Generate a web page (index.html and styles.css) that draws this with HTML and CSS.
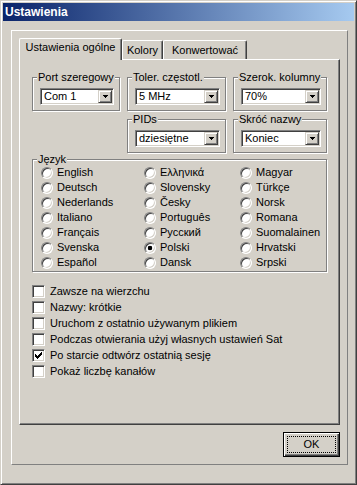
FILE: index.html
```html
<!DOCTYPE html>
<html lang="pl">
<head>
<meta charset="utf-8">
<title>Ustawienia</title>
<link rel="stylesheet" href="styles.css">
</head>
<body>
<div class="window">
  <div class="titlebar">Ustawienia</div>
  <div class="frame">
    <div class="tabs">
      <div class="tab active">Ustawienia ogólne</div>
      <div class="tab t-kolory">Kolory</div>
      <div class="tab t-konw">Konwertować</div>
    </div>
    <div class="panel">
      <div class="groups">
        <div class="group">
          <span class="legend">Port szeregowy</span>
          <div class="combo"><span class="val">Com 1</span><span class="drop"><svg width="5" height="3" viewBox="0 0 5 3" shape-rendering="crispEdges"><path d="M0 0h5v1H0zM1 1h3v1H1zM2 2h1v1H2z" fill="#000"/></svg></span></div>
        </div>
        <div class="group">
          <span class="legend">Toler. częstotl.</span>
          <div class="combo"><span class="val">5 MHz</span><span class="drop"><svg width="5" height="3" viewBox="0 0 5 3" shape-rendering="crispEdges"><path d="M0 0h5v1H0zM1 1h3v1H1zM2 2h1v1H2z" fill="#000"/></svg></span></div>
        </div>
        <div class="group">
          <span class="legend">Szerok. kolumny</span>
          <div class="combo"><span class="val">70%</span><span class="drop"><svg width="5" height="3" viewBox="0 0 5 3" shape-rendering="crispEdges"><path d="M0 0h5v1H0zM1 1h3v1H1zM2 2h1v1H2z" fill="#000"/></svg></span></div>
        </div>
        <div class="group col2">
          <span class="legend">PIDs</span>
          <div class="combo"><span class="val">dziesiętne</span><span class="drop"><svg width="5" height="3" viewBox="0 0 5 3" shape-rendering="crispEdges"><path d="M0 0h5v1H0zM1 1h3v1H1zM2 2h1v1H2z" fill="#000"/></svg></span></div>
        </div>
        <div class="group col3">
          <span class="legend">Skróć nazwy</span>
          <div class="combo"><span class="val">Koniec</span><span class="drop"><svg width="5" height="3" viewBox="0 0 5 3" shape-rendering="crispEdges"><path d="M0 0h5v1H0zM1 1h3v1H1zM2 2h1v1H2z" fill="#000"/></svg></span></div>
        </div>
      </div>

      <div class="group lang">
        <span class="legend">Język</span>
        <div class="radios">
          <div class="ritem"><span class="radio"></span>English</div>
          <div class="ritem"><span class="radio"></span>Deutsch</div>
          <div class="ritem"><span class="radio"></span>Nederlands</div>
          <div class="ritem"><span class="radio"></span>Italiano</div>
          <div class="ritem"><span class="radio"></span>Français</div>
          <div class="ritem"><span class="radio"></span>Svenska</div>
          <div class="ritem"><span class="radio"></span>Español</div>
          <div class="ritem"><span class="radio"></span>Ελληνικά</div>
          <div class="ritem"><span class="radio"></span>Slovensky</div>
          <div class="ritem"><span class="radio"></span>Česky</div>
          <div class="ritem"><span class="radio"></span>Português</div>
          <div class="ritem"><span class="radio"></span>Русский</div>
          <div class="ritem"><span class="radio on"></span>Polski</div>
          <div class="ritem"><span class="radio"></span>Dansk</div>
          <div class="ritem"><span class="radio"></span>Magyar</div>
          <div class="ritem"><span class="radio"></span>Türkçe</div>
          <div class="ritem"><span class="radio"></span>Norsk</div>
          <div class="ritem"><span class="radio"></span>Romana</div>
          <div class="ritem"><span class="radio"></span>Suomalainen</div>
          <div class="ritem"><span class="radio"></span>Hrvatski</div>
          <div class="ritem"><span class="radio"></span>Srpski</div>
        </div>
      </div>

      <div class="checks">
        <div class="citem"><span class="cbox"></span>Zawsze na wierzchu</div>
        <div class="citem"><span class="cbox"></span>Nazwy: krótkie</div>
        <div class="citem"><span class="cbox"></span>Uruchom z ostatnio używanym plikiem</div>
        <div class="citem"><span class="cbox"></span>Podczas otwierania użyj własnych ustawień Sat</div>
        <div class="citem"><span class="cbox"><svg width="7" height="7" viewBox="0 0 7 7" shape-rendering="crispEdges"><path d="M6 0h1v1H6zM5 1h2v1H5zM0 2h1v1H0zM4 2h3v1H4zM0 3h2v1H0zM3 3h3v1H3zM0 4h5v1H0zM1 5h3v1H1zM2 6h1v1H2z" fill="#000"/></svg></span>Po starcie odtwórz ostatnią sesję</div>
        <div class="citem"><span class="cbox"></span>Pokaż liczbę kanałów</div>
      </div>
    </div>
    <div class="buttons">
      <div class="btn"><span class="focus">OK</span></div>
    </div>
  </div>
</div>
</body>
</html>
```
FILE: styles.css
```css
* { box-sizing: border-box; }
html, body { margin: 0; padding: 0; background: #d4d0c8; }
body {
  font-family: "Liberation Sans", Arial, sans-serif;
  font-size: 11px;
  color: #000;
}

.window {
  width: 357px;
  height: 485px;
  background: #d4d0c8;
  border: 1px solid;
  border-color: #d4d0c8 #404040 #404040 #d4d0c8;
  box-shadow: inset 1px 1px 0 #fff, inset -1px -1px 0 #808080;
  padding: 2px;
}

.titlebar {
  height: 18px;
  line-height: 18px;
  padding-left: 2px;
  background: linear-gradient(to right, #0a246a, #a6caf0);
  color: #fff;
  font-weight: bold;
  font-size: 12px;
}

.frame {
  margin: 9px 6px 0 8px;
  height: 435px;
  border: 1px solid;
  border-color: #fff #808080 #808080 #fff;
  padding: 7px 7px 0 7px;
  display: flex;
  flex-direction: column;
}

.tabs {
  height: 21px;
  display: flex;
  align-items: flex-end;
  flex: none;
}
.tab {
  height: 19px;
  padding-top: 3px;
  text-align: center;
  line-height: 13px;
  white-space: nowrap;
  background: #d4d0c8;
  border-left: 1px solid #fff;
  border-top: 1px solid #fff;
  border-right: 1px solid #404040;
  border-radius: 2px 2px 0 0;
  box-shadow: inset -1px 0 0 #808080;
}
.tab.active {
  width: 103px;
  height: 22px;
  padding-top: 2px;
  margin-bottom: -1px;
  position: relative;
  z-index: 1;
}
.t-kolory { width: 41px; }
.t-konw { width: 84px; }

.panel {
  height: 366px;
  flex: none;
  border: 1px solid;
  border-color: #fff #404040 #404040 #fff;
  box-shadow: inset -1px -1px 0 #808080;
  padding: 17px 11px 0 12px;
}

.groups {
  display: grid;
  grid-template-columns: 88px 99px 94px;
  grid-auto-rows: 34px;
  column-gap: 7px;
  row-gap: 8px;
}
.col2 { grid-column: 2; }
.col3 { grid-column: 3; }

.group {
  position: relative;
  border: 1px solid #808080;
  box-shadow: 1px 1px 0 #fff, inset 1px 1px 0 #fff;
  padding: 10px 5px 0 7px;
}
.legend {
  position: absolute;
  top: -7px;
  left: 4px;
  padding: 0 1px;
  line-height: 13px;
  background: #d4d0c8;
  white-space: nowrap;
}

.combo {
  height: 17px;
  background: #fff;
  border: 1px solid;
  border-color: #808080 #fff #fff #808080;
  box-shadow: inset 1px 1px 0 #404040, inset -1px -1px 0 #d4d0c8;
  padding: 1px;
  display: flex;
}
.combo .val {
  flex: 1;
  padding-left: 2px;
  line-height: 13px;
  white-space: nowrap;
  overflow: hidden;
}
.drop {
  width: 14px;
  height: 13px;
  flex: none;
  background: #d4d0c8;
  border: 1px solid;
  border-color: #d4d0c8 #404040 #404040 #d4d0c8;
  box-shadow: inset 1px 1px 0 #fff, inset -1px -1px 0 #808080;
  display: flex;
  align-items: center;
  justify-content: center;
}
.drop svg { display: block; }

.lang {
  margin-top: 6px;
  width: 295px;
  height: 113px;
  padding: 5px 0 0 8px;
}
.radios {
  display: grid;
  grid-template-columns: 103px 96px 1fr;
  grid-template-rows: repeat(7, 15px);
  grid-auto-flow: column;
}
.ritem {
  display: flex;
  align-items: center;
  gap: 4px;
  white-space: nowrap;
  line-height: 15px;
}
.radio {
  width: 12px;
  height: 12px;
  flex: none;
  border-radius: 50%;
  border: 1px solid;
  border-color: #808080 #fff #fff #808080;
  background: #fff;
  box-shadow: inset 1px 1px 0 #404040, inset -1px -1px 0 #d4d0c8;
}
.radio.on {
  background: radial-gradient(circle at 50% 50%, #000 0, #000 2px, #fff 2.6px);
}

.checks {
  margin-top: 11px;
}
.citem {
  height: 16px;
  line-height: 16px;
  display: flex;
  align-items: flex-start;
  gap: 5px;
  white-space: nowrap;
}
.cbox {
  width: 13px;
  height: 13px;
  margin-top: 2px;
  flex: none;
  background: #fff;
  border: 1px solid;
  border-color: #808080 #fff #fff #808080;
  box-shadow: inset 1px 1px 0 #404040, inset -1px -1px 0 #d4d0c8;
  padding: 2px;
}
.cbox svg { display: block; }

.buttons {
  margin-top: 7px;
  display: flex;
  justify-content: flex-end;
}
.btn {
  width: 57px;
  height: 25px;
  border: 1px solid #000;
  box-shadow: inset 1px 1px 0 #fff, inset -1px -1px 0 #404040, inset -2px -2px 0 #808080;
  padding: 3px;
}
.focus {
  display: flex;
  align-items: center;
  justify-content: center;
  width: 100%;
  height: 100%;
  border: 1px dotted #000;
  line-height: 13px;
}
```
